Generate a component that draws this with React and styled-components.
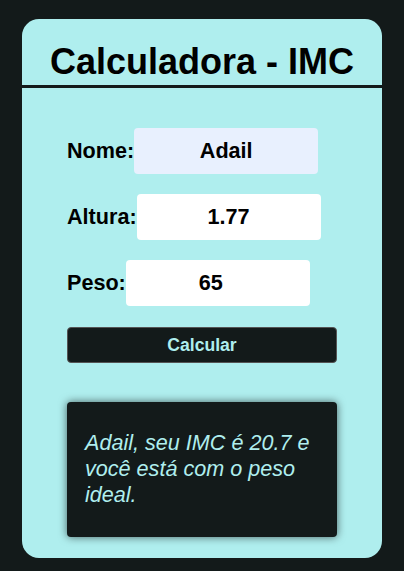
import React, { useState } from "react"
import styled, { createGlobalStyle } from "styled-components"

const GlobalStyle = createGlobalStyle`
  * {
    box-sizing: border-box;
  }

  body {
    margin: 0;
    background-color: #131a1a;
    font-family: "Liberation Sans", Arial, sans-serif;
  }
`

const calcular = (altura, peso) => {
  const a = parseFloat(altura)
  const p = parseFloat(peso)
  if (!a || !p) return null
  return (p / (a * a)).toFixed(1)
}

const faixa = (imc) => {
  if (imc < 18.5) return "abaixo do peso"
  if (imc < 25) return "peso ideal"
  if (imc < 30) return "sobrepeso"
  return "obesidade"
}

const App = () => {
  const [nome, setNome] = useState("Adail")
  const [altura, setAltura] = useState("1.77")
  const [peso, setPeso] = useState("65")
  const [resultado, setResultado] = useState(() => {
    const imc = calcular("1.77", "65")
    return `Adail, seu IMC é ${imc} e você está com o ${faixa(imc)}.`
  })

  const onCalcular = (e) => {
    e.preventDefault()
    const imc = calcular(altura, peso)
    if (!imc) return
    setResultado(`${nome}, seu IMC é ${imc} e você está com o ${faixa(imc)}.`)
  }

  return (
    <>
      <GlobalStyle />
      <Card>
        <Header>
          <Title>Calculadora - IMC</Title>
        </Header>
        <Form onSubmit={onCalcular}>
          <Field>
            <Label>Nome:</Label>
            <Input $autofill value={nome} onChange={(e) => setNome(e.target.value)} />
          </Field>
          <Field>
            <Label>Altura:</Label>
            <Input value={altura} onChange={(e) => setAltura(e.target.value)} />
          </Field>
          <Field>
            <Label>Peso:</Label>
            <Input $spin value={peso} onChange={(e) => setPeso(e.target.value)} />
          </Field>
          <Button type="submit">Calcular</Button>
          <Result>{resultado}</Result>
        </Form>
      </Card>
    </>
  )
}

export default App

const Card = styled.div`
  width: 360px;
  margin: 19px auto 13px;
  background-color: paleturquoise;
  border-radius: 17px;
  overflow: hidden;
`

const Header = styled.header`
  height: 69px;
  border-bottom: 3px solid #131a1a;
  display: flex;
  align-items: center;
  justify-content: center;
  padding-top: 20px;
`

const Title = styled.h1`
  margin: 0;
  font-size: 36px;
  font-weight: bold;
  color: #000;
`

const Form = styled.form`
  padding: 40px 45px 21px;
  display: flex;
  flex-direction: column;
`

const Field = styled.label`
  display: flex;
  align-items: center;
  height: 46px;
  margin-bottom: 20px;
`

const Label = styled.span`
  font-size: 21.6px;
  font-weight: bold;
  color: #000;
`

const Input = styled.input`
  width: 184px;
  height: 46px;
  border: none;
  border-radius: 4px;
  outline: none;
  padding: 0 ${(props) => (props.$spin ? "16px" : "2px")} 0 2px;
  background-color: ${(props) => (props.$autofill ? "#e8f0fe" : "#fff")};
  font-family: "Liberation Sans", Arial, sans-serif;
  font-size: 21.6px;
  font-weight: bold;
  text-align: center;
  color: #000;
`

const Button = styled.button`
  width: 270px;
  height: 36px;
  margin-top: 1px;
  background-color: #131a1a;
  border: 1px solid #555;
  border-radius: 4px;
  color: paleturquoise;
  font-family: "Liberation Sans", Arial, sans-serif;
  font-size: 17.6px;
  font-weight: bold;
  cursor: pointer;
`

const Result = styled.p`
  margin: 39px 0 0;
  width: 270px;
  min-height: 135px;
  padding: 28px 18px;
  background-color: #131a1a;
  border-radius: 4px;
  box-shadow: 0 0 8px rgba(0, 0, 0, 0.6);
  color: paleturquoise;
  font-size: 21.6px;
  font-style: italic;
  line-height: 26px;
`
